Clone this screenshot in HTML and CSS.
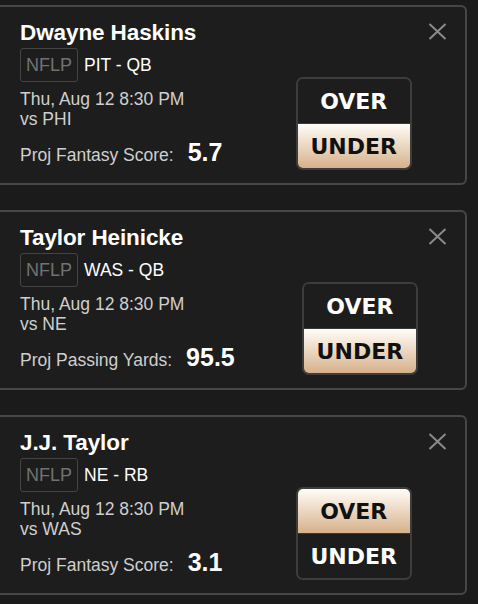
FILE: index.html
```html
<!DOCTYPE html>
<html lang="en">

<head>
    <meta charset="UTF-8">
    <meta name="viewport" content="width=device-width, initial-scale=1.0">
    <title>Picks</title>
    <link rel="stylesheet" href="styles.css">
</head>

<body>

    <div class="picks">

        <!-- Dwayne Haskins -->
        <div class="card">
            <div class="info">
                <div class="name">Dwayne Haskins</div>
                <div class="team">
                    <span class="badge">NFLP</span>
                    <span>PIT - QB</span>
                </div>
                <div class="game">Thu, Aug 12 8:30 PM<br>vs PHI</div>
                <div class="proj">
                    <span class="proj-label">Proj Fantasy Score:</span>
                    <span class="proj-value">5.7</span>
                </div>
            </div>
            <div class="choice">
                <div class="toggle">
                    <div class="opt">OVER</div>
                    <div class="opt active">UNDER</div>
                </div>
            </div>
            <div class="close">
                <svg width="19" height="17" viewBox="0 0 19 17">
                    <path d="M1.5 1 L17.5 16 M17.5 1 L1.5 16" stroke="#8a8a8a" stroke-width="2" fill="none" />
                </svg>
            </div>
        </div>

        <!-- Taylor Heinicke -->
        <div class="card">
            <div class="info">
                <div class="name">Taylor Heinicke</div>
                <div class="team">
                    <span class="badge">NFLP</span>
                    <span>WAS - QB</span>
                </div>
                <div class="game">Thu, Aug 12 8:30 PM<br>vs NE</div>
                <div class="proj">
                    <span class="proj-label">Proj Passing Yards:</span>
                    <span class="proj-value">95.5</span>
                </div>
            </div>
            <div class="choice">
                <div class="toggle">
                    <div class="opt">OVER</div>
                    <div class="opt active">UNDER</div>
                </div>
            </div>
            <div class="close">
                <svg width="19" height="17" viewBox="0 0 19 17">
                    <path d="M1.5 1 L17.5 16 M17.5 1 L1.5 16" stroke="#8a8a8a" stroke-width="2" fill="none" />
                </svg>
            </div>
        </div>

        <!-- J.J. Taylor -->
        <div class="card">
            <div class="info">
                <div class="name">J.J. Taylor</div>
                <div class="team">
                    <span class="badge">NFLP</span>
                    <span>NE - RB</span>
                </div>
                <div class="game">Thu, Aug 12 8:30 PM<br>vs WAS</div>
                <div class="proj">
                    <span class="proj-label">Proj Fantasy Score:</span>
                    <span class="proj-value">3.1</span>
                </div>
            </div>
            <div class="choice">
                <div class="toggle">
                    <div class="opt active">OVER</div>
                    <div class="opt">UNDER</div>
                </div>
            </div>
            <div class="close">
                <svg width="19" height="17" viewBox="0 0 19 17">
                    <path d="M1.5 1 L17.5 16 M17.5 1 L1.5 16" stroke="#8a8a8a" stroke-width="2" fill="none" />
                </svg>
            </div>
        </div>

    </div>

</body>

</html>
```

FILE: styles.css
```css
body {
    margin: 0;
    background-color: #1b1b1b;
    font-family: 'Liberation Sans', Arial, sans-serif;
    color: #fff;
}

.picks {
    padding-top: 5px;
}

.card {
    display: flex;
    height: 180px;
    margin: 0 11px 25px -6px;
    padding: 13px 18px 0 24px;
    border: 2px solid #474747;
    border-radius: 6px;
    background-color: #1d1d1d;
    box-sizing: border-box;
}

.info {
    display: flex;
    flex-direction: column;
}

.name {
    font-size: 22.5px;
    font-weight: bold;
    line-height: 26px;
    letter-spacing: -0.1px;
    white-space: nowrap;
}

.team {
    display: flex;
    align-items: center;
    gap: 6px;
    margin-top: 2px;
    font-size: 17.5px;
}

.badge {
    display: inline-block;
    height: 32px;
    line-height: 32px;
    padding: 0 5px;
    border: 1.5px solid #444;
    border-radius: 3px;
    font-size: 18px;
    color: #727272;
}

.game {
    margin-top: 7px;
    font-size: 17.5px;
    line-height: 20px;
    color: #cfcfcf;
    white-space: nowrap;
}

.proj {
    display: flex;
    align-items: baseline;
    gap: 14px;
    margin-top: 9px;
    line-height: 28px;
    white-space: nowrap;
}

.proj-label {
    font-size: 17.5px;
    color: #cfcfcf;
}

.proj-value {
    font-size: 25px;
    font-weight: bold;
}

.choice {
    flex: 1;
    display: flex;
    justify-content: center;
    align-items: flex-end;
    padding-left: 60px;
    padding-bottom: 13px;
}

.toggle {
    width: 116px;
    border: 2px solid #3d3d3d;
    border-radius: 7px;
    overflow: hidden;
    box-sizing: border-box;
}

.opt {
    height: 44px;
    line-height: 45px;
    text-align: center;
    font-family: 'DejaVu Sans', sans-serif;
    font-weight: bold;
    font-size: 22px;
    color: #fff;
    background-color: #1d1d1d;
}

.opt + .opt {
    border-top: 1px solid #3a3a3a;
}

.opt.active {
    color: #111;
    background: linear-gradient(to bottom, #fffdf8, #d7b18a);
}

.close {
    margin-top: 3px;
    margin-left: 3px;
}
```
